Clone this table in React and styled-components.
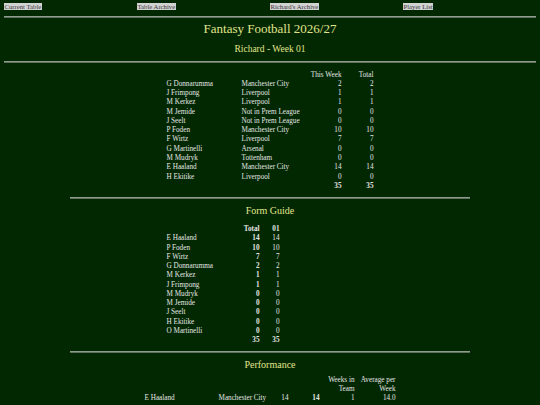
import React from 'react'
import styled, { createGlobalStyle } from 'styled-components'

const GlobalStyle = createGlobalStyle`
  html, body {
    margin: 0;
    padding: 0;
    background: #022802;
  }
  body {
    font-family: "Liberation Serif", "Times New Roman", serif;
    color: #e6e6e6;
    font-size: 7px;
  }
`

const Page = styled.div`
  padding: 0 4px;
  width: 532px;
`

const NavBar = styled.nav`
  display: grid;
  grid-template-columns: repeat(4, 1fr);
  height: 16px;
  padding-top: 3px;
  box-sizing: border-box;
`

const NavLink = styled.a`
  justify-self: start;
  background: #d2d2d2;
  color: #3a3a3a;
  font-size: 6.7px;
  line-height: 8px;
  height: 8px;
  text-decoration: none;
  padding: 0 0.5px;
`

const Rule = styled.hr`
  border: 0;
  border-top: 1px solid #8d9c8d;
  border-bottom: 1px solid #5f705f;
  margin: ${props => props.$gap || '0'};
  width: ${props => props.$width || 'auto'};
  align-self: center;
`

const Header = styled.header`
  text-align: center;
  color: #e2e48c;
`

const Title = styled.h1`
  margin: 0;
  font-weight: normal;
  font-size: 13px;
  line-height: 22px;
`

const Subtitle = styled.h2`
  margin: 0;
  font-weight: normal;
  font-size: 9.5px;
  line-height: 18px;
  margin-bottom: 3px;
`

const Section = styled.section`
  display: flex;
  flex-direction: column;
  align-items: center;
`

const SectionTitle = styled.h3`
  margin: 0;
  font-weight: normal;
  font-size: 10px;
  line-height: 14px;
  color: #e2e48c;
  text-align: center;
  padding-top: 5px;
`

const TableBox = styled.div`
  width: ${props => props.$width}px;
  padding-top: ${props => props.$top || 0}px;
`

const Table = styled.table`
  border-collapse: collapse;
  table-layout: fixed;
  font-size: 7.2px;
`

const Row = styled.tr`
  height: 9.27px;
`

const Cell = styled.td`
  padding: 0;
  line-height: 8px;
  text-align: ${props => (props.$right ? 'right' : 'left')};
  font-weight: ${props => (props.$bold ? 'bold' : 'normal')};
  white-space: nowrap;
  vertical-align: middle;
`

const Head = styled.th`
  padding: 0;
  line-height: 8.6px;
  text-align: right;
  vertical-align: bottom;
  font-weight: ${props => (props.$bold ? 'bold' : 'normal')};
`

const weekRows = [
  ['G Donnarumma', 'Manchester City', 2, 2],
  ['J Frimpong', 'Liverpool', 1, 1],
  ['M Kerkez', 'Liverpool', 1, 1],
  ['M Jemide', 'Not in Prem League', 0, 0],
  ['J Seelt', 'Not in Prem League', 0, 0],
  ['P Foden', 'Manchester City', 10, 10],
  ['F Wirtz', 'Liverpool', 7, 7],
  ['G Martinelli', 'Arsenal', 0, 0],
  ['M Mudryk', 'Tottenham', 0, 0],
  ['E Haaland', 'Manchester City', 14, 14],
  ['H Ekitike', 'Liverpool', 0, 0],
]

const formRows = [
  ['E Haaland', 14, 14],
  ['P Foden', 10, 10],
  ['F Wirtz', 7, 7],
  ['G Donnarumma', 2, 2],
  ['M Kerkez', 1, 1],
  ['J Frimpong', 1, 1],
  ['M Mudryk', 0, 0],
  ['M Jemide', 0, 0],
  ['J Seelt', 0, 0],
  ['H Ekitike', 0, 0],
  ['O Martinelli', 0, 0],
]

function WeekTable() {
  return (
    <TableBox $width={207} $top={7}>
      <Table>
        <colgroup>
          <col style={{ width: 75 }} />
          <col style={{ width: 60 }} />
          <col style={{ width: 40 }} />
          <col style={{ width: 32 }} />
        </colgroup>
        <thead>
          <Row>
            <Head />
            <Head />
            <Head>This Week</Head>
            <Head>Total</Head>
          </Row>
        </thead>
        <tbody>
          {weekRows.map(([name, club, week, total]) => (
            <Row key={name}>
              <Cell>{name}</Cell>
              <Cell>{club}</Cell>
              <Cell $right>{week}</Cell>
              <Cell $right>{total}</Cell>
            </Row>
          ))}
          <Row>
            <Cell />
            <Cell />
            <Cell $right $bold>35</Cell>
            <Cell $right $bold>35</Cell>
          </Row>
        </tbody>
      </Table>
    </TableBox>
  )
}

function FormTable() {
  return (
    <TableBox $width={207} $top={6}>
      <Table>
        <colgroup>
          <col style={{ width: 75 }} />
          <col style={{ width: 18 }} />
          <col style={{ width: 20 }} />
        </colgroup>
        <thead>
          <Row>
            <Head />
            <Head $bold>Total</Head>
            <Head $bold>01</Head>
          </Row>
        </thead>
        <tbody>
          {formRows.map(([name, total, wk]) => (
            <Row key={name}>
              <Cell>{name}</Cell>
              <Cell $right $bold>{total}</Cell>
              <Cell $right>{wk}</Cell>
            </Row>
          ))}
          <Row>
            <Cell />
            <Cell $right $bold>35</Cell>
            <Cell $right $bold>35</Cell>
          </Row>
        </tbody>
      </Table>
    </TableBox>
  )
}

function PerformanceTable() {
  return (
    <TableBox $width={251} $top={4}>
      <Table>
        <colgroup>
          <col style={{ width: 74 }} />
          <col style={{ width: 50 }} />
          <col style={{ width: 20 }} />
          <col style={{ width: 31 }} />
          <col style={{ width: 35 }} />
          <col style={{ width: 41 }} />
        </colgroup>
        <thead>
          <tr>
            <Head />
            <Head />
            <Head />
            <Head />
            <Head>Weeks in Team</Head>
            <Head>Average per Week</Head>
          </tr>
        </thead>
        <tbody>
          <Row>
            <Cell>E Haaland</Cell>
            <Cell>Manchester City</Cell>
            <Cell $right>14</Cell>
            <Cell $right $bold>14</Cell>
            <Cell $right>1</Cell>
            <Cell $right>14.0</Cell>
          </Row>
        </tbody>
      </Table>
    </TableBox>
  )
}

export default function App() {
  return (
    <Page>
      <GlobalStyle />
      <NavBar>
        <div><NavLink href="#">Current Table</NavLink></div>
        <div><NavLink href="#">Table Archive</NavLink></div>
        <div><NavLink href="#">Richard's Archive</NavLink></div>
        <div><NavLink href="#">Player List</NavLink></div>
      </NavBar>
      <Rule />
      <Header>
        <Title>Fantasy Football 2026/27</Title>
        <Subtitle>Richard - Week 01</Subtitle>
      </Header>
      <Rule />
      <Section>
        <WeekTable />
        <Rule $width="400px" $gap="7px 0 0" />
        <SectionTitle>Form Guide</SectionTitle>
        <FormTable />
        <Rule $width="400px" $gap="6px 0 0" />
        <SectionTitle>Performance</SectionTitle>
        <PerformanceTable />
      </Section>
    </Page>
  )
}
